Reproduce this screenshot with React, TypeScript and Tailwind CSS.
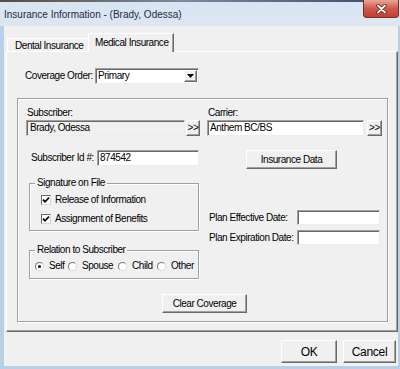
import React from "react";

const body =
  "font-['Liberation_Sans',Arial,sans-serif] text-[10px] leading-[12px] tracking-[-0.45px] text-black whitespace-nowrap";
const sunken =
  "border border-t-[#a0a0a0] border-l-[#a0a0a0] border-b-[#ececec] border-r-[#ececec] shadow-[inset_1px_1px_0_#696969]";
const raised =
  "border border-t-white border-l-white border-b-[#696969] border-r-[#696969] shadow-[inset_-1px_-1px_0_#a0a0a0] bg-[#f0f0f0] flex items-center justify-center";
const etched = "border border-[#a0a0a0] shadow-[1px_1px_0_#fff,inset_1px_1px_0_#fff]";

function Check() {
  return (
    <span className="w-[10px] h-[10px] bg-white border border-t-[#6a6a6a] border-l-[#6a6a6a] border-b-[#d8d8d8] border-r-[#d8d8d8] flex items-center justify-center shrink-0">
      <svg width="8" height="8" viewBox="0 0 8 8">
        <path d="M1 3.6 L3 5.8 L7 1.6" stroke="#000" strokeWidth="1.7" fill="none" />
      </svg>
    </span>
  );
}

function Radio({ on }: { on?: boolean }) {
  return (
    <span className="w-[9px] h-[9px] rounded-full bg-white border border-t-[#7a7a7a] border-l-[#7a7a7a] border-b-[#dcdcdc] border-r-[#dcdcdc] flex items-center justify-center shrink-0">
      {on && <span className="w-[3px] h-[3px] rounded-full bg-black" />}
    </span>
  );
}

export default function App() {
  return (
    <div className="w-[400px] h-[369px] flex flex-col bg-[#b9cfe8] overflow-hidden">
      {/* title bar */}
      <div className="h-[26px] flex shrink-0 bg-gradient-to-b from-[#d7e4f3] to-[#dde7f2]">
        <div className="flex-1 flex flex-col">
          <div className="h-[2px] bg-gradient-to-r from-[#5a4a3e] via-[#7d8aa0] to-[#44536b]" />
          <div className="pl-[4px] pt-[7px] font-['Liberation_Sans',sans-serif] text-[10px] leading-[12px] text-[#1e2a3a] whitespace-nowrap">
            Insurance Information - (Brady, Odessa)
          </div>
        </div>
        <div className="w-[36px] h-[18px] mr-[1px] rounded-b-[4px] border border-t-0 border-[#7b2b22] bg-gradient-to-b from-[#e6a597] via-[#d0584a] to-[#c3402f] flex items-center justify-center">
          <svg width="11" height="10" viewBox="0 0 11 10">
            <path d="M2 1.5 L9 8.5 M9 1.5 L2 8.5" stroke="#5a1e18" strokeWidth="3.4" strokeLinecap="round" />
            <path d="M2 1.5 L9 8.5 M9 1.5 L2 8.5" stroke="#ffffff" strokeWidth="1.8" strokeLinecap="round" />
          </svg>
        </div>
      </div>

      {/* client area */}
      <div className={`flex-1 ml-[4px] mr-[2px] mb-[3px] bg-[#f0f0f0] flex flex-col pl-[2px] ${body}`}>
        {/* tabs */}
        <div className="mt-[7px] h-[19px] flex items-end pl-[1px] relative z-10">
          <div className="w-[81px] h-[14px] border-t border-l border-white pl-[7px] pt-[1px]">Dental Insurance</div>
          <div className="w-[86px] h-[19px] border-t border-l border-white border-r border-r-[#696969] shadow-[inset_-1px_0_0_#a0a0a0] bg-[#f0f0f0] pl-[6px] pt-[3px]">
            Medical Insurance
          </div>
        </div>

        {/* tab panel */}
        <div className="-mt-[1px] w-[392px] h-[281px] border border-t-white border-l-white border-r-[#696969] border-b-[#696969] shadow-[inset_-1px_-1px_0_#a0a0a0] flex flex-col">
          {/* coverage order */}
          <div className="mt-[16px] ml-[18px] flex items-center">
            <div className="w-[70px]">Coverage Order:</div>
            <div className={`w-[104px] h-[16px] bg-white flex items-center ${sunken}`}>
              <div className="flex-1 pl-[2px]">Primary</div>
              <div className={`w-[13px] h-[12px] mr-[1px] ${raised}`}>
                <svg width="7" height="4" viewBox="0 0 7 4">
                  <path d="M0 0 L7 0 L3.5 4 Z" fill="#000" />
                </svg>
              </div>
            </div>
          </div>

          {/* outer group */}
          <div className={`mt-[14px] ml-[10px] w-[371px] h-[224px] flex flex-col ${etched}`}>
            {/* row 1 */}
            <div className="mt-[8px] ml-[8px] flex">
              <div className="w-[174px] flex flex-col">
                <div className="pl-[1px]">Subscriber:</div>
                <div className="mt-[1px] flex">
                  <div className={`w-[159px] h-[16px] bg-[#f0f0f0] pl-[3px] flex items-center ${sunken}`}>Brady, Odessa</div>
                  <div className={`ml-[1px] w-[14px] h-[16px] ${raised}`}>&gt;&gt;</div>
                </div>
              </div>
              <div className="ml-[7px] w-[175px] flex flex-col">
                <div className="pl-[1px]">Carrier:</div>
                <div className="mt-[1px] flex">
                  <div className={`w-[157px] h-[16px] bg-white pl-[2px] flex items-center ${sunken}`}>Anthem BC/BS</div>
                  <div className={`ml-[3px] w-[15px] h-[16px] ${raised}`}>&gt;&gt;</div>
                </div>
              </div>
            </div>

            {/* row 2 */}
            <div className="mt-[14px] ml-[8px] flex items-start">
              <div className="w-[174px] flex items-center">
                <div className="w-[71px] pl-[5px]">Subscriber Id #:</div>
                <div className={`w-[102px] h-[16px] bg-white pl-[2px] flex items-center ${sunken}`}>874542</div>
              </div>
              <div className={`ml-[46px] w-[91px] h-[19px] ${raised}`}>Insurance Data</div>
            </div>

            {/* row 3 */}
            <div className="mt-[14px] ml-[11px] flex">
              <div className="w-[170px] flex flex-col">
                <div className={`relative w-[170px] h-[48px] pl-[11px] pt-[10px] flex flex-col ${etched}`}>
                  <span className="absolute -top-[7px] left-[5px] px-[2px] bg-[#f0f0f0]">Signature on File</span>
                  <div className="flex items-center h-[12px]">
                    <Check />
                    <span className="ml-[4px]">Release of Information</span>
                  </div>
                  <div className="mt-[7px] flex items-center h-[12px]">
                    <Check />
                    <span className="ml-[4px]">Assignment of Benefits</span>
                  </div>
                </div>
                <div className={`relative mt-[19px] w-[170px] h-[29px] pl-[5px] pt-[9px] flex ${etched}`}>
                  <span className="absolute -top-[7px] left-[5px] px-[2px] bg-[#f0f0f0]">Relation to Subscriber</span>
                  <div className="w-[33px] flex items-center h-[12px]">
                    <Radio on />
                    <span className="ml-[5px]">Self</span>
                  </div>
                  <div className="w-[50px] flex items-center h-[12px]">
                    <Radio />
                    <span className="ml-[5px]">Spouse</span>
                  </div>
                  <div className="w-[39px] flex items-center h-[12px]">
                    <Radio />
                    <span className="ml-[5px]">Child</span>
                  </div>
                  <div className="flex items-center h-[12px]">
                    <Radio />
                    <span className="ml-[5px]">Other</span>
                  </div>
                </div>
              </div>
              <div className="ml-[10px] mt-[27px] flex flex-col">
                <div className="flex items-center">
                  <div className="w-[88px]">Plan Effective Date:</div>
                  <div className={`w-[83px] h-[15px] bg-white ${sunken}`} />
                </div>
                <div className="mt-[5px] flex items-center">
                  <div className="w-[88px]">Plan Expiration Date:</div>
                  <div className={`w-[83px] h-[15px] bg-white ${sunken}`} />
                </div>
              </div>
            </div>

            {/* row 4 */}
            <div className="mt-[15px] ml-[144px]">
              <div className={`w-[85px] h-[19px] ${raised}`}>Clear Coverage</div>
            </div>
          </div>
        </div>

        {/* dialog buttons */}
        <div className="mt-[8px] flex justify-end pr-[2px] text-[12px] tracking-[-0.3px]">
          <div className={`w-[56px] h-[23px] ${raised}`}>OK</div>
          <div className={`ml-[6px] w-[53px] h-[23px] ${raised}`}>Cancel</div>
        </div>
      </div>
    </div>
  );
}
